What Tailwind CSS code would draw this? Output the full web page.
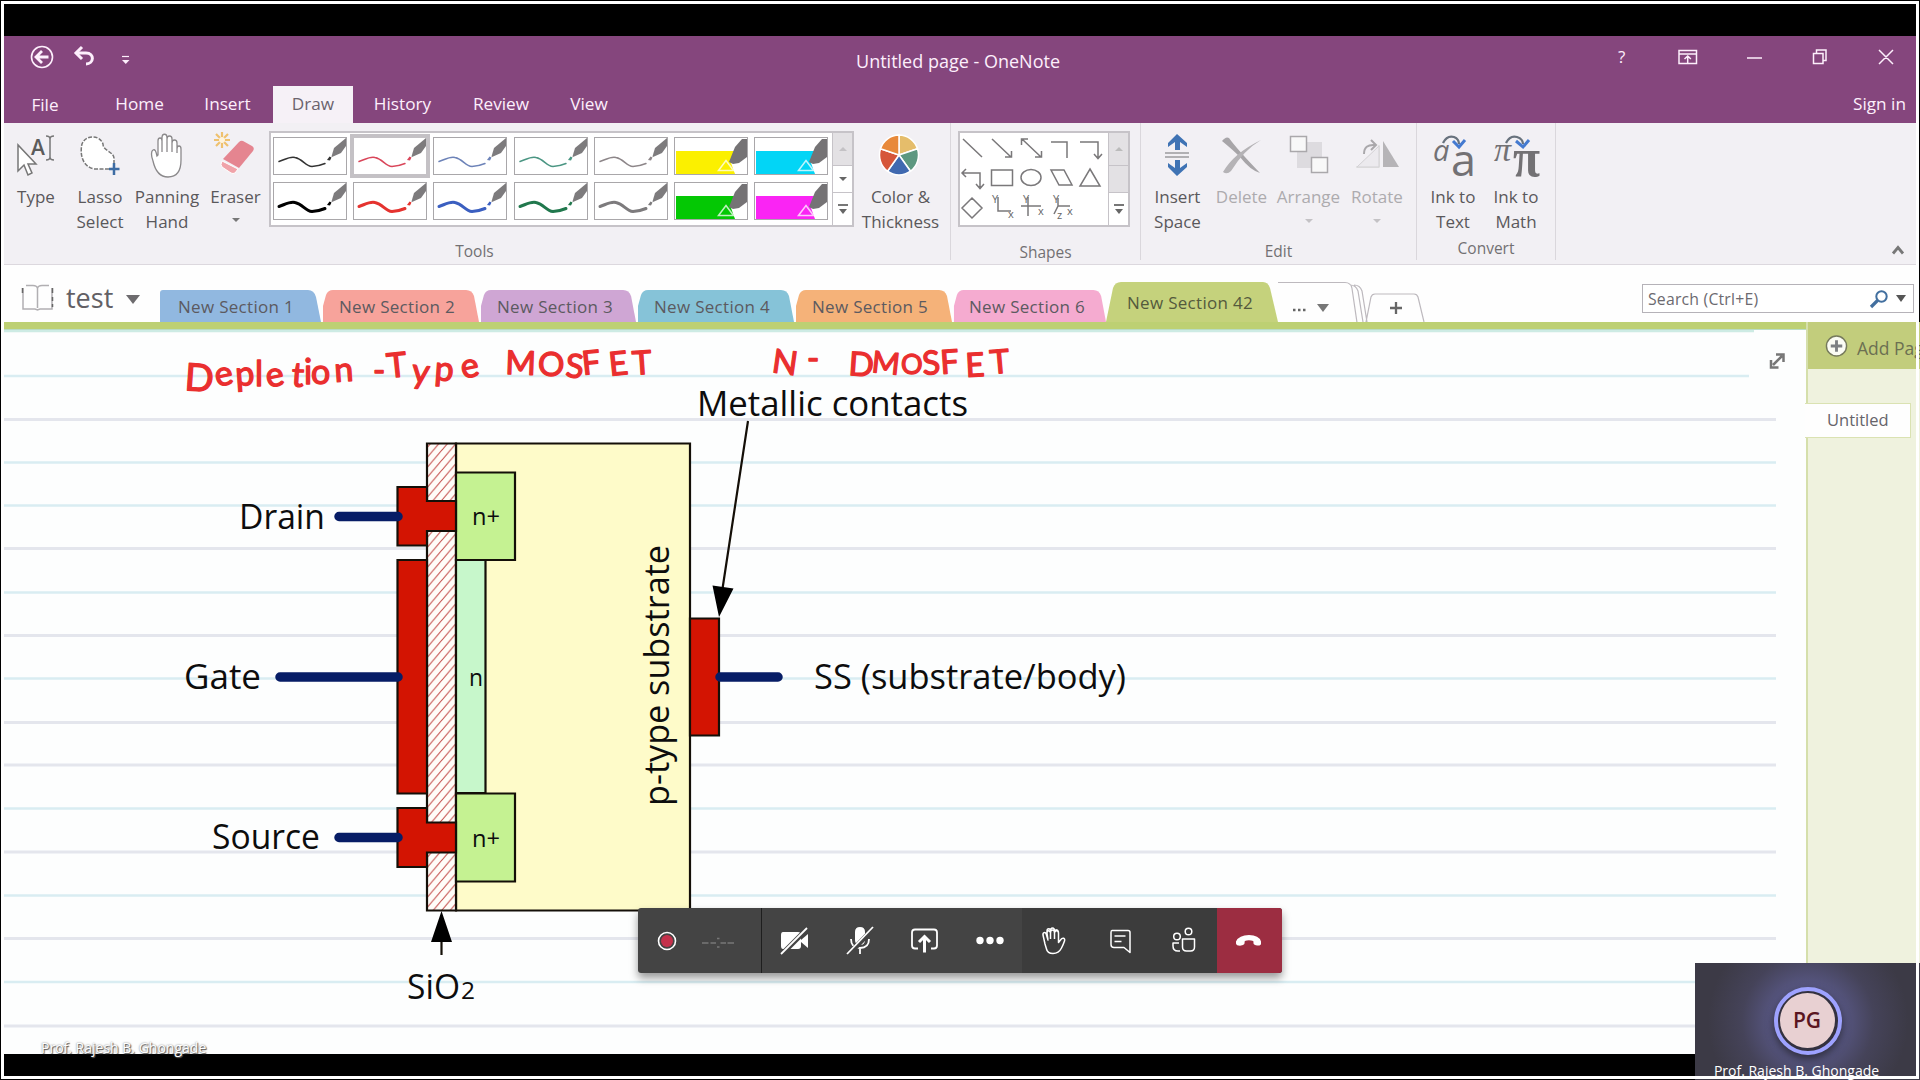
<!DOCTYPE html>
<html lang="en">
<head>
<meta charset="utf-8">
<title>Untitled page - OneNote</title>
<script src="https://cdn.jsdelivr.net/npm/@tailwindcss/browser@4"></script>
</head>
<body class="w-[1920px] h-[1080px] overflow-hidden bg-black font-['Open_Sans','Noto_Sans',sans-serif] text-[#555]">
<svg class="absolute w-0 h-0">
  <defs>
    <symbol id="pen" viewBox="0 0 72 36">
      <path d="M5 23.500C10 22 16 18 21 19.500C29 21 31 28 38 28.500Q45 28 51 25.500" fill="none" stroke="currentColor" stroke-linecap="round"/>
      <path d="M53 22l2.500-3.500 2 1-1.500 3z" fill="currentColor" stroke="none"/>
      <path d="M57.500 18.500L60 10 72 0v8l-5 7-9 4z" fill="#7d7b7d" stroke="none"/>
    </symbol>
    <symbol id="marker" viewBox="0 0 72 36">
      <path d="M1 13h59l-4 12 4 11H1z" fill="currentColor"/>
      <path d="M54 24l6-15L67 1h5v18l-8 6-6 1z" fill="#757375"/>
      <path d="M43.500 32.500L51 22.500l7.500 10z" fill="currentColor" stroke="#fff" stroke-opacity=".75" stroke-width="1.500"/>
    </symbol>
    <pattern id="hatch" width="8.500" height="10" patternUnits="userSpaceOnUse">
      <rect width="8.500" height="10" fill="#fffdf9"/>
      <path d="M-2 12.350L10.500-2.350M-2 2.350L2-2.350M6.500 12.350L10.500 7.650" stroke="#c4514e" stroke-width="1.100"/>
    </pattern>
  </defs>
</svg>

<div class="flex flex-col w-[1920px] h-[1080px] pt-9 px-[4px]">
  <!-- title bar -->
  <div class="h-[87px] shrink-0 bg-[#85467d] text-[#fdeffc] flex flex-col">
    <div class="h-[50px] relative flex items-center justify-between">
      <svg class="w-[140px] h-[50px]" viewBox="4 36 140 50" fill="none" stroke="#fdeffc">
        <circle cx="42" cy="57" r="10.500" stroke-width="1.600"/><path d="M48.500 57H37M42 51l-6 6 6 6" stroke-width="2.800"/>
        <path d="M77 53h9c9 0 8 11 0 11" stroke-width="3"/><path d="M82 47l-6 6 6 6" stroke-width="3"/>
        <path d="M122 56.500h7" stroke-width="1.200"/><path d="M122 60h7.500l-3.750 4z" fill="#fdeffc" stroke="none"/>
      </svg>
      <div class="absolute left-0 right-[4px] top-[13px] text-center text-[18px] leading-[25px]">Untitled page - OneNote</div>
      <svg class="w-[320px] h-[50px]" viewBox="1596 36 320 50" fill="none" stroke="#fdeffc" stroke-width="1.500">
        <text x="1618" y="63" font-size="17" fill="#fdeffc" stroke="none">?</text>
        <path d="M1679 50.500h17.500v13h-17.500zM1679 54h17.500M1687.700 63v-7M1684.500 59l3.200-3 3.200 3"/>
        <path d="M1747 58h15M1813.500 53.500h9.500v10h-9.500zM1816.500 53v-3h9.500v10.500h-3M1879 50l14 14M1893 50l-14 14"/>
      </svg>
    </div>
    <div class="h-[37px] flex text-[17.200px] leading-[36px] text-center">
      <div class="w-[82px] pt-px">File</div>
      <div class="w-[107px]">Home</div>
      <div class="w-[80px] pr-[11px]">Insert</div>
      <div class="w-[80px] bg-[#f6f1f7] text-[#6b636d]">Draw</div>
      <div class="w-[99px]">History</div>
      <div class="w-[98px]">Review</div>
      <div class="w-[78px]">View</div>
      <div class="ml-auto pr-[10px]">Sign in</div>
    </div>
  </div>

  <!-- ribbon -->
  <div class="h-[142px] shrink-0 bg-[#f2f0f4] border-b border-[#dcd8de] flex text-[17px] leading-[25px] text-center text-[#5a585b]">
    <div class="w-[946px] flex flex-col">
      <div class="flex h-[115px]">
        <div class="w-[64px] flex flex-col items-center">
          <svg class="w-16 h-[61px]" viewBox="4 123 64 61"><path d="M18 145v26l6-6 4 10 4-2-4-9h8z" fill="#fff" stroke="#777" stroke-width="1.500"/><text x="31" y="155" font-size="21" font-weight="600" fill="#5b5b5b">A</text><path d="M46 136q4 0 4 3v18q0 3-4 3M54 136q-4 0-4 3v18q0 3 4 3" fill="none" stroke="#777" stroke-width="1.500"/></svg>
          <div>Type</div>
        </div>
        <div class="w-[64px] flex flex-col items-center">
          <svg class="w-16 h-[61px]" viewBox="68 123 64 61"><path d="M109 169H94c-13-3-14-17-12-25 4-10 18-9 21 0 0 7 10 7 11 14v6" fill="#fff" stroke="#777" stroke-width="1.500" stroke-dasharray="4 1.500"/><path d="M114 163v12M109 169h10.500" stroke="#3d6ca3" stroke-width="2.500"/></svg>
          <div>Lasso<br>Select</div>
        </div>
        <div class="w-[70px] flex flex-col items-center">
          <svg class="w-16 h-[61px]" viewBox="135 123 64 61"><path d="M153 161c-2-5-2-10 0-11s3 1 4 6l1-1v-14c0-4 4-4 4 0v-3c0-5 5-5 5 0v1c0-4 5-4 5 0v4c0-4 5-4 5 0v6c0-4 4-4 4 0v11c0 12-5 17-13 17-9 0-13-7-15-16zM162 139v13M167 138v14M172 139v13M177 143v10" fill="#fff" stroke="#8b898b" stroke-width="1.300"/></svg>
          <div class="w-20">Panning<br>Hand</div>
        </div>
        <div class="w-[67px] flex flex-col items-center">
          <svg class="w-16 h-[61px]" viewBox="203 123 64 61"><path d="M221 132v16M213 140h16M215 134l12 12M227 134l-12 12" stroke="#efc16e" stroke-width="2.200"/><circle cx="221" cy="140" r="3" fill="#fff4dd"/><path d="M238 142q2-2 4-1l9 5q3 2 1 5l-14 17-16-9z" fill="#e58590"/><path d="M221 161l16 8-3 4q-2 1-4 0l-9-6q-2-2 0-6z" fill="#f0a3a9" stroke="#fff" stroke-width="1"/></svg>
          <div>Eraser</div>
          <div class="mt-[9px] border-x-4 border-x-transparent border-t-4 border-t-[#777]"></div>
        </div>
        <div class="mt-2 w-[585px] h-[96px] bg-white border-2 border-[#c6c3c8] flex">
          <div class="flex-1 grid grid-cols-[repeat(7,72px)] grid-rows-[36px_36px] content-start gap-x-[8.200px] gap-y-[9px] pl-[3px] pt-[5px]">
            <svg class="w-[72px] h-[36px] bg-white outline outline-[#a9a7aa] text-[#333]" stroke-width="1.500"><use href="#pen"/></svg>
            <svg class="w-[72px] h-[36px] bg-white outline-[4px] outline-[#c4c1c5] text-[#d9465a]" stroke-width="1.500"><use href="#pen"/></svg>
            <svg class="w-[72px] h-[36px] bg-white outline outline-[#a9a7aa] text-[#6d83b8]" stroke-width="1.500"><use href="#pen"/></svg>
            <svg class="w-[72px] h-[36px] bg-white outline outline-[#a9a7aa] text-[#4b9683]" stroke-width="1.500"><use href="#pen"/></svg>
            <svg class="w-[72px] h-[36px] bg-white outline outline-[#a9a7aa] text-[#8d8689]" stroke-width="1.500"><use href="#pen"/></svg>
            <svg class="w-[72px] h-[36px] bg-white outline outline-[#a9a7aa] text-[#fbf000]"><use href="#marker"/></svg>
            <svg class="w-[72px] h-[36px] bg-white outline outline-[#a9a7aa] text-[#02d5f6]"><use href="#marker"/></svg>
            <svg class="w-[72px] h-[36px] bg-white outline outline-[#a9a7aa] text-black" stroke-width="3"><use href="#pen"/></svg>
            <svg class="w-[72px] h-[36px] bg-white outline outline-[#a9a7aa] text-[#e5332f]" stroke-width="3"><use href="#pen"/></svg>
            <svg class="w-[72px] h-[36px] bg-white outline outline-[#a9a7aa] text-[#3b5fc0]" stroke-width="3"><use href="#pen"/></svg>
            <svg class="w-[72px] h-[36px] bg-white outline outline-[#a9a7aa] text-[#21784d]" stroke-width="3"><use href="#pen"/></svg>
            <svg class="w-[72px] h-[36px] bg-white outline outline-[#a9a7aa] text-[#7d7b7d]" stroke-width="3"><use href="#pen"/></svg>
            <svg class="w-[72px] h-[36px] bg-white outline outline-[#a9a7aa] text-[#04c804]"><use href="#marker"/></svg>
            <svg class="w-[72px] h-[36px] bg-white outline outline-[#a9a7aa] text-[#fa24f4]"><use href="#marker"/></svg>
          </div>
          <div class="w-[20px] border-l border-[#c6c3c8] flex flex-col">
            <div class="h-[32px] bg-[#e3e1e4] flex items-center justify-center"><span class="border-x-4 border-x-transparent border-b-4 border-b-[#c4c2c5]"></span></div>
            <div class="h-[28px] border-y border-[#c6c3c8] flex items-center justify-center"><span class="border-x-4 border-x-transparent border-t-4 border-t-[#666]"></span></div>
            <div class="flex-1 flex flex-col gap-[3px] items-center justify-center"><span class="w-[10px] h-[2px] bg-[#777]"></span><span class="border-x-4 border-x-transparent border-t-[5px] border-t-[#666]"></span></div>
          </div>
        </div>
        <div class="w-[94px] flex flex-col items-center">
          <svg class="w-16 h-[61px] -ml-1" viewBox="-32 -32 64 61" stroke="#fff" stroke-width="1.500"><path d="M0 0V-20A19.500 20 0 0 1 18.500-6.200z" fill="#e5bd6b"/><path d="M0 0L18.500-6.200A19.500 20 0 0 1 11.500 16.200z" fill="#5d9880"/><path d="M0 0L11.500 16.200A19.500 20 0 0 1-11.500 16.200z" fill="#4069b0"/><path d="M0 0L-11.500 16.200A19.500 20 0 0 1-18.500-6.200z" fill="#d6563a"/><path d="M0 0L-18.500-6.200A19.500 20 0 0 1 0-20z" fill="#e8893a"/></svg>
          <div class="w-24 pr-px">Color &amp;<br>Thickness</div>
        </div>
      </div>
      <div class="text-[15.500px] text-[#727073] pt-[2px] pr-[5px]">Tools</div>
    </div>

    <div class="w-[191px] flex flex-col">
      <div class="flex h-[115px] border-x border-[#dad7dc] pl-[7px]">
        <div class="mt-2 w-[172px] h-[96px] bg-white border-2 border-[#c6c3c8] flex">
          <svg class="w-[148px] h-[92px]" viewBox="960 133 148 92" fill="none" stroke="#7a787a" stroke-width="1.500">
            <path d="M963 139l19 18M992 139l19 18M1005 157h6.500v-6M1022 139l19 18M1035 157h6.500v-6M1021.500 145v-6h6.500M1051 142h16v16M1080 142h18v16M1094 154l4 4.500 4-4.500"/>
            <path d="M962 173h18v15M966 169l-4 4 4 4M976 184l4 4.500 4-4.500M991.500 170h21v15.500h-21z"/><ellipse cx="1031" cy="177.500" rx="10" ry="8"/><path d="M1051 170h13l8 15h-13zM1090 169l10 17h-20z"/>
            <path d="M972 198l10 10-10 10-10-10zM998 197v14h13M1028 197v19M1021 206h20M1058 198v8l-4 8M1058 206h12"/>
            <g font-size="11" fill="#666" stroke="none"><text x="992" y="203">Y</text><text x="1008" y="218">x</text><text x="1023" y="203">Y</text><text x="1038" y="215">x</text><text x="1053" y="203">Y</text><text x="1067" y="215">x</text><text x="1057" y="219">z</text></g>
          </svg>
          <div class="w-[20px] border-l border-[#c6c3c8] flex flex-col">
            <div class="h-[32px] bg-[#e3e1e4] flex items-center justify-center"><span class="border-x-4 border-x-transparent border-b-4 border-b-[#bbb]"></span></div>
            <div class="h-[28px] border-y border-[#c6c3c8] bg-[#e3e1e4]"></div>
            <div class="flex-1 flex flex-col gap-[3px] items-center justify-center"><span class="w-[10px] h-[2px] bg-[#777]"></span><span class="border-x-4 border-x-transparent border-t-[5px] border-t-[#666]"></span></div>
          </div>
        </div>
      </div>
      <div class="text-[15.500px] text-[#727073] border-x border-[#dad7dc] h-[22px] pt-[2px]">Shapes</div>
    </div>

    <div class="w-[275px] flex flex-col">
      <div class="flex h-[115px] pl-[5px]">
        <div class="w-[63px] flex flex-col items-center">
          <svg class="w-16 h-[61px]" viewBox="1146 123 64 61"><path d="M1177 134l-9 9v4l7-5v8h5v-8l7 5v-4zM1177 176l-9-9v-4l7 5v-8h5v8l7-5v4z" fill="#3f73b4"/><path d="M1165 153h24M1165 157h24" stroke="#9c9a9d" stroke-width="1.500"/></svg>
          <div>Insert<br>Space</div>
        </div>
        <div class="w-[65px] flex flex-col items-center text-[#adabae]">
          <svg class="w-16 h-[61px]" viewBox="1210 123 64 61"><path d="M1222 141q4-5 7-3 7 10 31 35-10-3-20-16-7-7-18-16z" fill="#a7a5a8"/><path d="M1261 140q-17 10-30 31-4 4-8 1 11-19 38-32z" fill="#b5b3b6"/></svg>
          <div>Delete</div>
        </div>
        <div class="w-[69px] flex flex-col items-center text-[#adabae]">
          <svg class="w-16 h-[61px]" viewBox="1276 123 64 61"><path d="M1304 142h17v16h-17zM1296 152h15v16h-15z" fill="#dddbdf"/><path d="M1289.500 136.500h16v15h-16zM1310.500 157.500h16v15h-16z" fill="#f8f8f8" stroke="#aaa8ab" stroke-width="1.500"/></svg>
          <div>Arrange</div>
          <div class="mt-[10px] border-x-4 border-x-transparent border-t-4 border-t-[#c4c2c5]"></div>
        </div>
        <div class="w-[68px] flex flex-col items-center text-[#adabae]">
          <svg class="w-16 h-[61px]" viewBox="1345 123 64 61"><path d="M1383 141l16 26h-16z" fill="#b6b4b7"/><path d="M1379 145v22h-23" fill="none" stroke="#ddd" stroke-width="1.500"/><path d="M1357 167l22-21v21z" fill="#eceaee" stroke="#d3d1d4"/><path d="M1364 154q0-10 11-9M1371 140l5 5-5 5" fill="none" stroke="#aaa8ab" stroke-width="2"/></svg>
          <div>Rotate</div>
          <div class="mt-[10px] border-x-4 border-x-transparent border-t-4 border-t-[#c4c2c5]"></div>
        </div>
      </div>
      <div class="text-[15.500px] text-[#727073] pt-[2px]">Edit</div>
    </div>

    <div class="w-[140px] h-[137px] flex flex-col border-x border-[#dad7dc]">
      <div class="flex h-[115px] pl-[4px]">
        <div class="w-[64px] flex flex-col items-center">
          <svg class="w-16 h-[61px] overflow-visible" viewBox="1421 123 64 61"><g fill="#737174"><text x="1433" y="161" font-size="29" font-style="italic">a</text><text x="1451" y="176" font-size="44" font-weight="500" textLength="25" lengthAdjust="spacingAndGlyphs">a</text></g><path d="M1443 143q4-8 11-6 5 2 5 7" fill="none" stroke="#68727d" stroke-width="2.300"/><path d="M1453 141l6 6 6-7" fill="none" stroke="#447ad0" stroke-width="3"/></svg>
          <div>Ink to<br>Text</div>
        </div>
        <div class="w-[62px] flex flex-col items-center">
          <svg class="w-16 h-[61px] overflow-visible" viewBox="1484 123 64 61"><g fill="#737174" font-family="Liberation Serif"><text x="1494" y="161" font-size="34" font-style="italic">π</text><text x="1513" y="176" font-size="54" font-weight="700" textLength="27" lengthAdjust="spacingAndGlyphs">π</text></g><path d="M1506 143q4-8 11-6 6 2 6 7" fill="none" stroke="#68727d" stroke-width="2.300"/><path d="M1516 141l7 6 6-7" fill="none" stroke="#447ad0" stroke-width="3"/></svg>
          <div>Ink to<br>Math</div>
        </div>
      </div>
      <div class="text-[15.500px] text-[#727073] pt-[2px]">Convert</div>
    </div>
    <div class="flex-1 flex justify-end items-end pr-[11px] pb-[9px]">
      <svg class="w-[14px] h-[10px]" viewBox="0 0 14 10"><path d="M2 8.500l5-6 5 6" fill="none" stroke="#777" stroke-width="2.800"/></svg>
    </div>
  </div>

  <!-- notebook name, section tabs, search -->
  <div class="h-[57px] shrink-0 bg-[#fefefe] flex items-end relative text-[17px] tracking-[0.300px] leading-[30px] text-[#5c5a60]">
    <div class="w-[156px] h-[57px] flex items-center pl-[17px] pt-[12px]">
      <svg class="w-[33px] h-[28px] mb-1" viewBox="0 0 33 28" fill="none" stroke="#8a888b" stroke-width="1.500"><path d="M5 1.500h7q4 0 4.500 3 .5-3 4.500-3h7M16.500 4v20M2 4v21h12l2.500 1 2.500-1h12V4" stroke="#b1afb2"/><path d="M1.500 4v5M31.500 4v5M31.500 13v4M31.500 20v3" stroke="#666"/></svg>
      <span class="ml-[12px] text-[27px] tracking-[0px] text-[#626065] pb-1">test</span>
      <span class="ml-[13px] border-x-[7px] border-x-transparent border-t-[9px] border-t-[#6d6b6e]"></span>
    </div>
    <div class="w-[161px] h-[32px] relative"><svg class="absolute inset-0 w-full h-full" viewBox="0 0 161 32" preserveAspectRatio="none"><path d="M0 32V3q0-3 3-3h145q6 0 8 7l5 25z" fill="#91b8e0"/></svg><div class="relative pl-[18px] pt-[2px]">New Section 1</div></div>
    <div class="w-[158px] h-[32px] relative"><svg class="absolute inset-0 w-full h-full" viewBox="0 0 158 32" preserveAspectRatio="none"><path d="M2 32V16L5 5q2-5 7-5h133q6 0 8 6l5 26z" fill="#f7a39b"/></svg><div class="relative pl-[18px] pt-[2px]">New Section 2</div></div>
    <div class="w-[157px] h-[32px] relative"><svg class="absolute inset-0 w-full h-full" viewBox="0 0 158 32" preserveAspectRatio="none"><path d="M2 32V16L5 5q2-5 7-5h133q6 0 8 6l5 26z" fill="#cfa6d4"/></svg><div class="relative pl-[18px] pt-[2px]">New Section 3</div></div>
    <div class="w-[158px] h-[32px] relative"><svg class="absolute inset-0 w-full h-full" viewBox="0 0 158 32" preserveAspectRatio="none"><path d="M2 32V16L5 5q2-5 7-5h133q6 0 8 6l5 26z" fill="#86c3d8"/></svg><div class="relative pl-[18px] pt-[2px]">New Section 4</div></div>
    <div class="w-[158px] h-[32px] relative"><svg class="absolute inset-0 w-full h-full" viewBox="0 0 158 32" preserveAspectRatio="none"><path d="M2 32V16L5 5q2-5 7-5h133q6 0 8 6l5 26z" fill="#f5b279"/></svg><div class="relative pl-[18px] pt-[2px]">New Section 5</div></div>
    <div class="w-[154px] h-[32px] relative"><svg class="absolute inset-0 w-full h-full" viewBox="0 0 158 32" preserveAspectRatio="none"><path d="M2 32V16L5 5q2-5 7-5h133q6 0 8 6l5 26z" fill="#f5abd0"/></svg><div class="relative pl-[17px] pt-[2px]">New Section 6</div></div>
    <div class="w-[172px] h-[40px] relative"><svg class="absolute inset-0 w-full h-full" viewBox="0 0 172 40"><path d="M0 40L7 6q2-6 8-6h142q5 0 7 6l8 34z" fill="#c5d27c"/></svg><div class="relative pl-[21px] pt-[6px] text-[#545a3c]">New Section 42</div></div>
    <svg class="w-[156px] h-[42px]" viewBox="1278 280 156 42" fill="none" stroke="#bdb9be" stroke-width="1.200"><path d="M1268 282.500h77q6 0 7 6l5 34M1350 285q6 0 8 6l5 31M1354 285q6 0 8 6l5 31M1366 322l5-25q1-3 4-3h39q3 0 4 3l6 25"/><path d="M1390 308h12M1396 302v12" stroke="#666" stroke-width="2.300"/><path d="M1317 304h12l-6 8z" fill="#777" stroke="none"/><path d="M1293 310h2.500M1298 310h2.500M1303 310h2.500" stroke="#666" stroke-width="2.500"/></svg>
    <div class="ml-auto mr-[2px] mb-[9px] w-[272px] h-[29px] bg-white border border-[#b5b2b8] flex items-center pl-[5px] pr-[7px] text-[15.800px] tracking-[0.200px] text-[#6c6a70]">
      <span>Search (Ctrl+E)</span>
      <svg class="ml-auto w-5 h-5" viewBox="0 0 20 20" fill="none" stroke="#426f9f"><circle cx="12.500" cy="7.500" r="5.200" stroke-width="2"/><path d="M8.500 11.500L2 18" stroke-width="3.200"/></svg>
      <span class="ml-[7px] border-x-[5px] border-x-transparent border-t-[7px] border-t-[#555]"></span>
    </div>
  </div>

  <!-- page -->
  <div class="h-[732px] shrink-0 flex relative bg-[#fdfefe]">
    <div class="w-[1802px] flex flex-col">
      <div class="h-[8px] bg-[#bdd073] border-b border-[#b9dcc4]"></div>
      <svg class="w-[1802px] h-[724px]" viewBox="4 330 1802 724" font-family="Open Sans, Noto Sans, sans-serif">
        <path d="M4 331h1750" stroke="#cdebe4" stroke-width="2.500"/>
        <g stroke="#d9edf2" stroke-width="2.500"><path d="M4 376h1745M4 462.500h1772M4 505.500h1772M4 592.500h1772M4 678.500h1772M4 808.500h1772M4 895.500h1772M4 982h1772"/></g>
        <g stroke="#e4e6ed" stroke-width="2.800"><path d="M4 419.500h1772M4 548.500h1772M4 635.500h1772M4 722.500h1772M4 765h1772M4 852h1772M4 938.500h1772M4 1026h1772"/></g>
        <!-- heading ink -->
        <g fill="#ea2f2f" font-family="Lato, sans-serif" stroke="#ea2f2f" stroke-width="1.300" stroke-linejoin="round" font-size="33">
          <text font-size="34" x="184 217 236 255 268 291 304 311 335" y="390 387 386 386 388 386 384 384 382" rotate="4 -12 -4 0 -12 4 0 0 -4"><tspan font-size="38">D</tspan>epletion</text>
          <text x="373" y="382">-</text>
          <text font-size="34" x="388 411 434 463" y="378 382 380 379" rotate="-6 6 4 -12">Type</text>
          <text x="505 538 565 583 610 633" y="374 376 377 375 376 375" rotate="2 0 4 -6 -6 -4">MOSFET</text>
          <text x="771 807" y="372 370" rotate="8 0">N-</text>
          <text x="848 871 901 923 941 966 991" y="375 372 374 375 374 377 374" rotate="4 6 0 -4 -4 -3 -5">D<tspan font-size="30">M</tspan><tspan font-size="27">O</tspan>SFET</text>
        </g>
        <!-- device cross-section -->
        <g stroke="#140f08" stroke-width="2.200">
          <path d="M456 443.500h234v467h-234z" fill="#fefbc9"/>
          <path d="M427 443.500h29v467h-29z" fill="url(#hatch)"/>
          <path d="M456 560h29.500v233h-29.500z" fill="#c7f7cb"/>
          <path d="M456 472.500h59v87.500h-59zM456 793.500h59v88h-59z" fill="#c5f292"/>
          <path d="M397.500 487h29.500v14h29v30h-29v14.500h-29.500zM397.500 560h29.500v233.500h-29.500zM397.500 808h29.500v14.500h29v30h-29v14.500h-29.500zM690 618.500h29v117h-29z" fill="#d31402"/>
          <path d="M441.500 955v-20M748 421L722 592" fill="none"/>
        </g>
        <path d="M441.500 911l10.500 31h-21zM719 617l-6.500-31.500 21 3z" fill="#000"/>
        <path d="M339 516.500h59M280 677h118M339 837.500h59M720 677h58" stroke="#071d66" stroke-width="9.500" stroke-linecap="round"/>
        <g fill="#0d0d0d" font-size="34">
          <text x="697" y="415.500" textLength="271" lengthAdjust="spacingAndGlyphs">Metallic contacts</text>
          <text x="239" y="528.500" textLength="86" lengthAdjust="spacingAndGlyphs">Drain</text>
          <text x="184" y="688.500" textLength="77" lengthAdjust="spacingAndGlyphs">Gate</text>
          <text x="212" y="849" textLength="108" lengthAdjust="spacingAndGlyphs">Source</text>
          <text x="814" y="688.500" textLength="312" lengthAdjust="spacingAndGlyphs">SS (substrate/body)</text>
          <text x="407" y="999" textLength="53" lengthAdjust="spacingAndGlyphs">SiO</text>
          <text x="461" y="999" font-size="23" textLength="14" lengthAdjust="spacingAndGlyphs">2</text>
          <text transform="translate(669 806) rotate(-90)" textLength="261" lengthAdjust="spacingAndGlyphs">p-type substrate</text>
          <text x="472" y="525" font-size="24" textLength="28" lengthAdjust="spacingAndGlyphs">n+</text>
          <text x="472" y="846.500" font-size="24" textLength="28" lengthAdjust="spacingAndGlyphs">n+</text>
          <text x="469" y="685.500" font-size="24" textLength="14" lengthAdjust="spacingAndGlyphs">n</text>
        </g>
        <path d="M1773 365l9-9M1776 354.500h7.500v7.500M1771 360v7.500h7.500" fill="none" stroke="#777" stroke-width="2.500"/>
      </svg>
    </div>
    <div class="flex-1 bg-[#eff2de] border-l-2 border-[#d5dfab] flex flex-col">
      <div class="h-[47px] bg-[#c2cd7c] flex items-center pl-[17px] gap-[9px] overflow-hidden whitespace-nowrap text-[17.500px] text-[#6c7052]">
        <svg class="w-[23px] h-[24px] shrink-0" viewBox="0 0 24 24"><circle cx="12" cy="12" r="10.500" fill="#fbfcf4" stroke="#767a5c" stroke-width="1.500"/><path d="M6 12h12M12 6v12" stroke="#7d8082" stroke-width="3"/></svg>
        <span class="pt-[5px]">Add Page</span>
      </div>
      <div class="mt-[34px] -ml-[3px] w-[106px] h-[35px] bg-[#fefefe] border border-l-0 border-[#dae2b2] text-[16.500px] leading-[32px] pl-[22px] text-[#66646a]">Untitled</div>
    </div>
    <div class="absolute left-[37px] top-[714px] text-[14px] leading-[24px] text-white [text-shadow:1px_1px_1px_#555,0_0_2px_#777]">Prof. Rajesh B. Ghongade</div>
  </div>
</div>

<!-- call controls -->
<div class="absolute left-[638px] top-[908px] w-[644px] h-[65px] rounded-[3px] overflow-hidden flex bg-[#444]">
  <div class="w-[124px] border-r border-[#1e1e1e] flex items-center pl-[19px] gap-[25px] text-[#777]">
    <svg class="w-5 h-5" viewBox="0 0 20 20"><circle cx="10" cy="10" r="8.500" fill="#444" stroke="#fff" stroke-width="1.600"/><circle cx="10" cy="10" r="6" fill="#c4314b"/></svg>
    <svg class="w-[32px] h-3 mt-[3px]" viewBox="0 0 32 12"><path d="M0 7h6.500M8.500 7H14M18.500 7H24M25.500 7H32M15 2.500h2.500M15 11h2.500" stroke="#777" stroke-width="1.600"/></svg>
  </div>
  <svg class="w-[260px] h-[65px]" viewBox="762 908 260 65" fill="none" stroke="#fff" stroke-width="1.800">
    <path d="M783 932h15q3 0 3 3v11q0 3-3 3h-15q-2 0-2-3v-11q0-3 2-3z" fill="#fff" stroke="none"/><path d="M801 940l7-6v14l-7-6z" fill="#fff" stroke="none"/><path d="M781 955l27-27" stroke="#444" stroke-width="5"/><path d="M781 954l26-26"/>
    <path d="M855 932q0-5 5-5t5 5v8q0 5-5 5t-5-5z" fill="#fff" stroke="none"/><path d="M851 939q0 9 9 9t9-9M860 948v6"/><path d="M848 955l26-27" stroke="#444" stroke-width="5"/><path d="M847 954l26-27"/>
    <path d="M918 948.500h-3q-3 0-3-3v-13q0-3 3-3h19q3 0 3 3v13q0 3-3 3h-3"/><path d="M924.500 952.500v-14M919 942l5.500-5.500 5.500 5.500" stroke-width="3"/>
    <g fill="#fff" stroke="none"><circle cx="980" cy="940.500" r="3.700"/><circle cx="990" cy="940.500" r="3.700"/><circle cx="1000" cy="940.500" r="3.700"/></g>
  </svg>
  <svg class="w-[195px] h-[65px] bg-[#3c3c3c]" viewBox="1023 908 195 65" fill="none" stroke="#fff" stroke-width="1.500" stroke-linejoin="round">
    <path d="M1046 944l-2-9c-.5-3 2.500-3 3.200-1l1.800 6-1-7c0-3 3-3 3.500 0 0-4 4-4 4 0 .5-3 4-3 4 .5v9l2-2.500c2-3 5-2 4 1-1 3-2 5-3 7-2 4-4 5.500-8.500 5.500-4 0-6-2-6.500-4.500zM1048 933v-2c0-3 3.500-3 3.500 0v8M1051.500 931c0-4 4-4 4 0v8M1055.500 932c.5-3 4-3 4 1v8"/>
    <path d="M1113 930.500h16q2 0 2 2v20l-6-5h-10q-3 0-3-3v-12q0-2 1-2zM1115.500 936h11M1115.500 941.500h7"/>
    <circle cx="1178" cy="936.500" r="3.300"/><circle cx="1189.500" cy="931.500" r="3.300"/><path d="M1183.500 939h12v8q0 4-4 4h-4q-4 0-4-4zM1180 943h-6v3q0 5 5 5h2"/>
  </svg>
  <svg class="w-[65px] h-[65px] bg-[#9c2d41]" viewBox="1215 908 65 65"><path d="M1234 943.500v-2q3-6.500 13-6.500t12 6.500v2q0 2.500-4 2l-2-.5q-2-1-1.700-4-4.500-1.500-8.500 0 .2 3-1.800 4l-3 .7q-3.500 0-4-2.200z" fill="#fff"/></svg>
</div>
<div class="absolute left-[638px] top-[908px] w-[644px] h-[65px] rounded-[3px] shadow-[0_5px_9px_rgba(0,0,0,0.4)]"></div>

<!-- own participant tile -->
<div class="absolute left-[1695px] top-[963px] w-[225px] h-[117px] overflow-hidden bg-[radial-gradient(circle_at_113px_58px,#65659c_0,#54537b_40px,#454359_66px,#3c3a46_100px)] flex flex-col items-center pt-[24px]">
  <div class="w-[68px] h-[68px] shrink-0 rounded-full border-[4.500px] border-[#9ea2ff] bg-[#33313f] p-[2px] shadow-[0_4px_8px_#2f2e3c]">
    <div class="w-[55px] h-[55px] rounded-full bg-[#e8d0d2] text-[#5a1521] text-[21px] leading-[54px] font-semibold text-center">PG</div>
  </div>
  <div class="text-white text-[14px] leading-[20px] mt-[6px] mr-[22px] whitespace-nowrap">Prof. Rajesh B. Ghongade</div>
</div>

<!-- screen-share frame -->
<div class="absolute inset-px border-[3px] border-white pointer-events-none"></div>
</body>
</html>
